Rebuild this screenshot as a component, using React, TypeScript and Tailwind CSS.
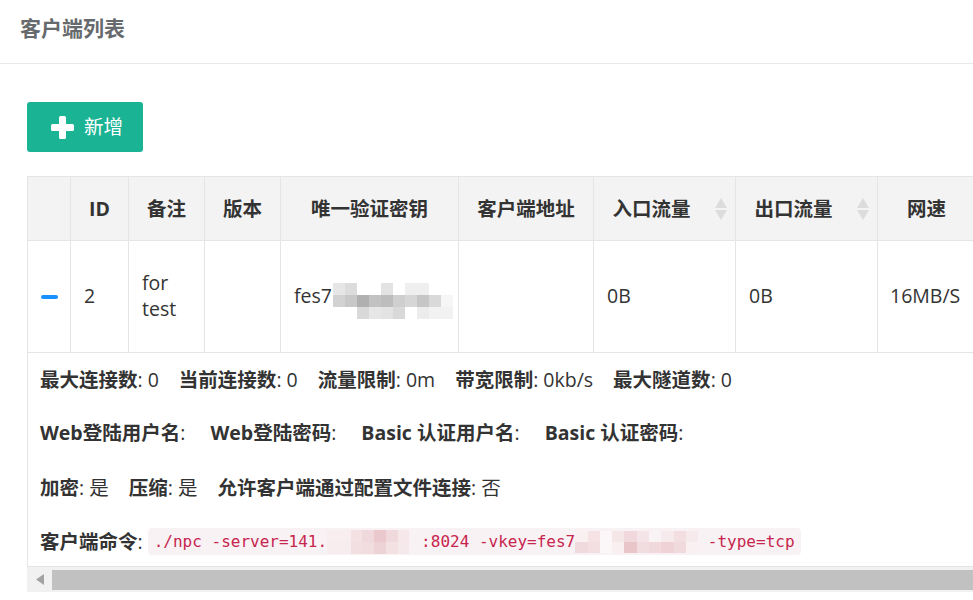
import React from "react";

type MosaicProps = { rows: string[][]; cell: number; cellW?: number };

function Mosaic({ rows, cell, cellW }: MosaicProps) {
  const w = cellW ?? cell;
  return (
    <span className="inline-flex flex-col shrink-0">
      {rows.map((r, i) => (
        <span key={i} className="flex">
          {r.map((c, j) => (
            <span key={j} style={{ width: w, height: cell, background: c }} />
          ))}
        </span>
      ))}
    </span>
  );
}

const keyMosaic = [
  ["#e6e6e6", "#dcdcdc", "#ffffff", "#ffffff", "#e3e3e3", "#ffffff", "#efefef", "#efefef", "#ffffff", "#ffffff"],
  ["#d2d2d2", "#c8c8c8", "#b0b0b0", "#c2c2c2", "#bdbdbd", "#cfcfcf", "#d6d6d6", "#c6c6c6", "#d9d9d9", "#f6f6f6"],
  ["#ffffff", "#ffffff", "#d9d9d9", "#e6e6e6", "#e3e3e3", "#d9d9d9", "#ffffff", "#ececec", "#f2f2f2", "#f2f2f2"],
];

const ipMosaic = [
  ["#f8eef0", "#f8eef0", "#f3e1e4", "#f0d9dd", "#eac8cc", "#f0d9dd", "#f6e8ea", "#f9f2f4"],
  ["#f7ecee", "#f7ecee", "#f2dfe2", "#f1dcdf", "#eed3d6", "#f3e1e4", "#f6e9eb", "#f9f2f4"],
];

const vkeyMosaic = [
  ["#f9f0f2", "#f4e2e5", "#fbf6f7", "#f5e6e8", "#f0d8dc", "#f5e4e7", "#faf3f5", "#f7eaed", "#f3dfe2", "#f7eaed"],
  ["#f1dadd", "#f3dfe2", "#fbf6f7", "#f9eef0", "#e9c4c8", "#f1dcdf", "#f0d8dc", "#eed2d6", "#f1dadd", "#f9f0f2"],
];

function SortIcon() {
  return (
    <svg width="12" height="22" viewBox="0 0 12 22" className="absolute right-[8px] top-1/2 -translate-y-1/2">
      <polygon points="0,10 6,0 12,10" fill="#dcdcdc" />
      <polygon points="0,12 12,12 6,22" fill="#dcdcdc" />
    </svg>
  );
}

export default function App() {
  const cellB = "border-r border-[#e5e5e5] shrink-0";
  return (
    <div className="w-[973px] h-[600px] overflow-hidden bg-white text-[#333] font-['Open_Sans','Noto_Sans_CJK_SC',sans-serif] text-[19.5px]">
      {/* page title */}
      <div className="h-[64px] border-b border-[#e7eaec] pt-[14px] pl-[20px]">
        <h2 className="text-[21px] leading-[28px] font-bold text-[#676a6c]">客户端列表</h2>
      </div>

      {/* add button */}
      <div className="pt-[38px] pl-[27px]">
        <button className="w-[116px] h-[50px] rounded-[3px] bg-[#1ab394] flex items-center pl-[24px] gap-[10px] text-white text-[19.5px]">
          <svg width="23" height="23" viewBox="0 0 23 23">
            <rect x="8" y="0" width="7" height="23" rx="1.5" fill="#fff" />
            <rect x="0" y="8" width="23" height="7" rx="1.5" fill="#fff" />
          </svg>
          <span className="leading-none">新增</span>
        </button>
      </div>

      {/* table */}
      <div className="ml-[27px] mt-[24px] w-[946px] overflow-hidden">
        <div className="w-[1000px] border-l border-t border-[#e5e5e5]">
          {/* header */}
          <div className="flex h-[64px] bg-[#f3f3f3] border-b border-[#e5e5e5] font-bold">
            <div className={`${cellB} w-[43px]`} />
            <div className={`${cellB} w-[58px] flex items-center justify-center`}>ID</div>
            <div className={`${cellB} w-[76px] flex items-center justify-center`}>备注</div>
            <div className={`${cellB} w-[76px] flex items-center justify-center`}>版本</div>
            <div className={`${cellB} w-[178px] flex items-center justify-center`}>唯一验证密钥</div>
            <div className={`${cellB} w-[135px] flex items-center justify-center`}>客户端地址</div>
            <div className={`${cellB} w-[142px] relative flex items-center justify-center pr-[26px]`}>
              入口流量
              <SortIcon />
            </div>
            <div className={`${cellB} w-[142px] relative flex items-center justify-center pr-[26px]`}>
              出口流量
              <SortIcon />
            </div>
            <div className={`${cellB} w-[98px] flex items-center justify-center`}>网速</div>
          </div>

          {/* data row */}
          <div className="flex h-[112px] border-b border-[#e5e5e5] leading-[26px]">
            <div className={`${cellB} w-[43px] flex items-center justify-center`}>
              <span className="block w-[17px] h-[4px] rounded-[2px] bg-[#1890ff]" />
            </div>
            <div className={`${cellB} w-[58px] flex items-center pl-[13px] pb-[2px]`}>2</div>
            <div className={`${cellB} w-[76px] flex items-center pl-[13px] pb-[2px]`}>
              <span>
                for
                <br />
                test
              </span>
            </div>
            <div className={`${cellB} w-[76px]`} />
            <div className={`${cellB} w-[178px] flex items-center pl-[13px]`}>
              <span className="pb-[2px]">fes7</span>
              <span className="ml-[1px]">
                <Mosaic rows={keyMosaic} cell={12} />
              </span>
            </div>
            <div className={`${cellB} w-[135px]`} />
            <div className={`${cellB} w-[142px] flex items-center pl-[13px] pb-[2px]`}>0B</div>
            <div className={`${cellB} w-[142px] flex items-center pl-[13px] pb-[2px]`}>0B</div>
            <div className={`${cellB} w-[98px] flex items-center pl-[12px] pb-[2px]`}>16MB/S</div>
          </div>

          {/* detail row */}
          <div className="h-[214px] border-b border-[#e5e5e5] pl-[12px] flex flex-col">
            <div className="h-[53px] flex items-center gap-[20px] shrink-0">
              <span><b>最大连接数</b>: 0</span>
              <span><b>当前连接数</b>: 0</span>
              <span><b>流量限制</b>: 0m</span>
              <span><b>带宽限制</b>: 0kb/s</span>
              <span><b>最大隧道数</b>: 0</span>
            </div>
            <div className="h-[54px] flex items-center gap-[20px] shrink-0">
              <span><b>Web登陆用户名</b>:&nbsp;</span>
              <span><b>Web登陆密码</b>:&nbsp;</span>
              <span><b>Basic 认证用户名</b>:&nbsp;</span>
              <span><b>Basic 认证密码</b>:&nbsp;</span>
            </div>
            <div className="h-[55px] flex items-center gap-[20px] shrink-0">
              <span><b>加密</b>: 是</span>
              <span><b>压缩</b>: 是</span>
              <span><b>允许客户端通过配置文件连接</b>: 否</span>
            </div>
            <div className="flex-1 flex items-start pt-[13px]">
              <div className="h-[27px] flex items-center">
                <span><b>客户端命令</b>:&nbsp;</span>
                <code className="h-[27px] rounded-[4px] bg-[#f9f2f4] text-[#c7254e] px-[6px] flex items-center font-['DejaVu_Sans_Mono',monospace] text-[16px] leading-[27px] whitespace-pre">
                  <span>./npc -server=141.</span>
                  <Mosaic rows={ipMosaic} cell={12} cellW={11.75} />
                  <span>:8024 -vkey=fes7</span>
                  <Mosaic rows={vkeyMosaic} cell={11} cellW={12.3} />
                  <span> -type=tcp</span>
                </code>
              </div>
            </div>
          </div>
        </div>

        {/* horizontal scrollbar */}
        <div className="h-[25px] bg-[#f1f1f1] flex items-center">
          <div className="w-[25px] h-full flex items-center justify-center">
            <svg width="8" height="11" viewBox="0 0 8 11">
              <polygon points="8,0 8,11 0,5.5" fill="#a3a3a3" />
            </svg>
          </div>
          <div className="h-[20px] flex-1 bg-[#c1c1c1]" />
        </div>
      </div>
    </div>
  );
}
